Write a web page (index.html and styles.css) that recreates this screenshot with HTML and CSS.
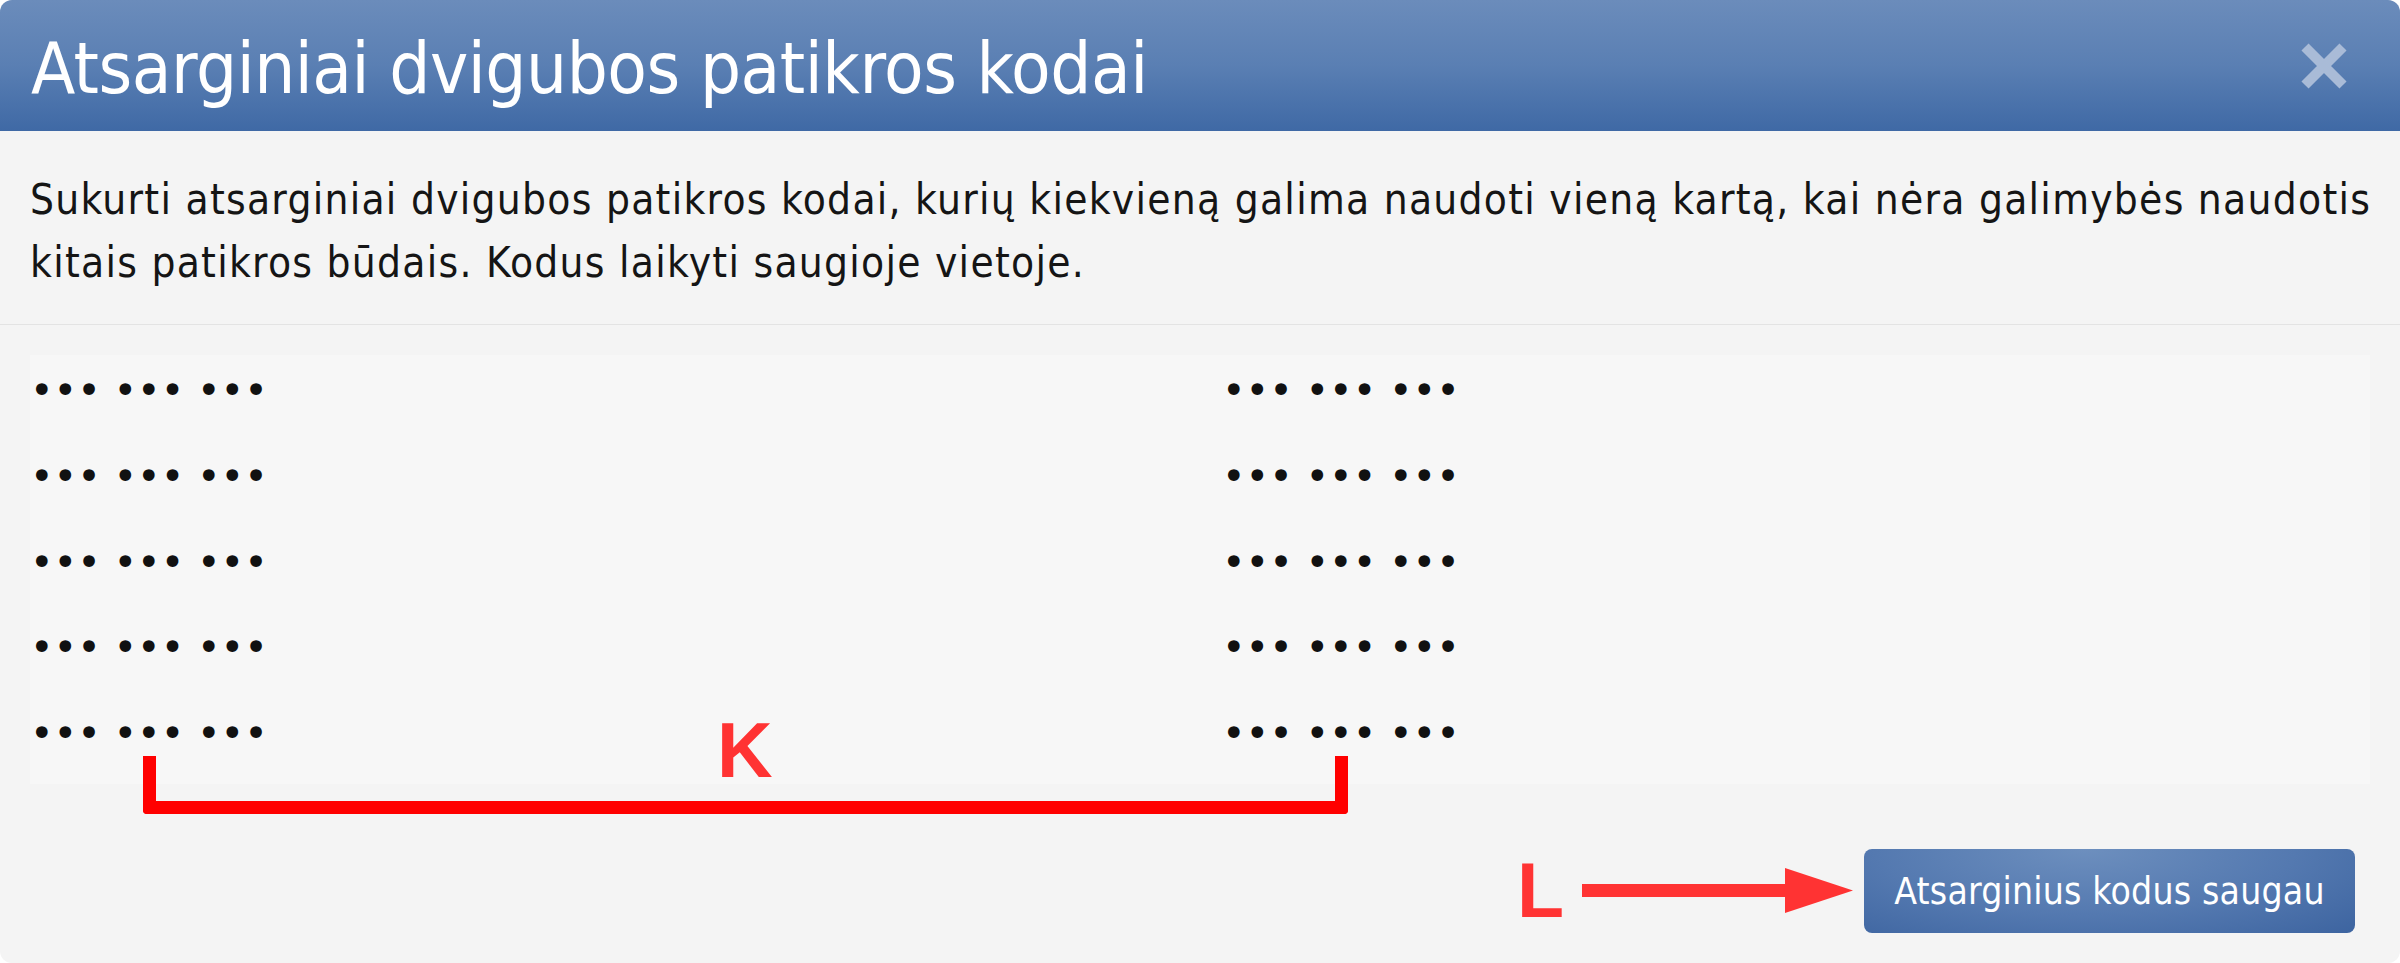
FILE: index.html
```html
<!DOCTYPE html>
<html lang="lt">
<head>
<meta charset="utf-8">
<title>Atsarginiai dvigubos patikros kodai</title>
<link rel="stylesheet" href="styles.css">
</head>
<body>
<div class="dialog">
  <div class="header">
    <h1 class="title">Atsarginiai dvigubos patikros kodai</h1>
    <svg class="close" width="48" height="46" viewBox="0 0 48 46" aria-label="Uždaryti">
      <path d="M5 4 L43 42 M43 4 L5 42" stroke="#a9bbd7" stroke-width="10" fill="none"/>
    </svg>
  </div>
  <div class="intro">
    <p class="intro-text">Sukurti atsarginiai dvigubos patikros kodai, kurių kiekvieną galima naudoti vieną kartą, kai nėra galimybės naudotis<br>kitais patikros būdais. Kodus laikyti saugioje vietoje.</p>
  </div>
  <div class="codes">
    <div class="code">••• ••• •••</div>
    <div class="code">••• ••• •••</div>
    <div class="code">••• ••• •••</div>
    <div class="code">••• ••• •••</div>
    <div class="code">••• ••• •••</div>
    <div class="code">••• ••• •••</div>
    <div class="code">••• ••• •••</div>
    <div class="code">••• ••• •••</div>
    <div class="code">••• ••• •••</div>
    <div class="code">••• ••• •••</div>
  </div>
  <div class="footer">
    <button class="save-btn">Atsarginius kodus saugau</button>
  </div>

  <div class="bracket"></div>
  <div class="mark mark-k">K</div>
  <div class="mark mark-l">L</div>
  <svg class="arrow" width="271" height="45" viewBox="0 0 271 45">
    <rect x="0" y="16" width="205" height="13" fill="#ff3333"/>
    <polygon points="203,0 271,22.5 203,45" fill="#ff3333"/>
  </svg>
</div>
</body>
</html>
```
FILE: styles.css
```css
html, body {
  margin: 0;
  padding: 0;
  background: #ffffff;
}

.dialog {
  position: relative;
  width: 2400px;
  height: 963px;
  border-radius: 12px;
  overflow: hidden;
  background: #f4f4f4;
  display: flex;
  flex-direction: column;
  font-family: "DejaVu Sans Condensed", "DejaVu Sans", sans-serif;
  font-stretch: condensed;
}

.header {
  height: 131px;
  flex: none;
  box-sizing: border-box;
  padding: 0 52px 0 31px;
  display: flex;
  align-items: center;
  justify-content: space-between;
  background: linear-gradient(to bottom, #6b8cbb 0%, #5a7fb3 50%, #3f69a5 100%);
}

.title {
  margin: 0;
  font-weight: normal;
  font-size: 72px;
  line-height: 1;
  letter-spacing: -0.45px;
  color: #ffffff;
  padding-top: 4px;
}

.close {
  display: block;
  flex: none;
}

.intro {
  flex: none;
  padding: 37px 30px 30px 30px;
  border-bottom: 1px solid #e3e3e3;
}

.intro-text {
  margin: 0;
  font-size: 42px;
  line-height: 63px;
  letter-spacing: 1.27px;
  color: #151515;
  white-space: nowrap;
}

.codes {
  flex: none;
  margin: 30px 30px 0 30px;
  height: 429px;
  box-sizing: border-box;
  padding-top: 15px;
  background: #f7f7f7;
  display: grid;
  grid-template-columns: 1192px 1fr;
  grid-auto-flow: column;
  grid-template-rows: repeat(5, 40px);
  row-gap: 45.75px;
}

.code {
  font-family: "DejaVu Sans", sans-serif;
  font-stretch: normal;
  font-size: 40px;
  line-height: 40px;
  color: #111111;
  white-space: pre;
}

.footer {
  flex: 1;
  display: flex;
  justify-content: flex-end;
  align-items: flex-start;
  padding: 65px 45px 0 0;
}

.save-btn {
  height: 84px;
  width: 491px;
  border: none;
  border-radius: 8px;
  padding: 0;
  font-family: "DejaVu Sans Condensed", "DejaVu Sans", sans-serif;
  font-stretch: condensed;
  font-size: 37px;
  letter-spacing: 0.2px;
  color: #ffffff;
  background: radial-gradient(ellipse at 45% 0%, #6d8fbe 0%, #5479b0 55%, #3d64a0 100%);
}

.bracket {
  position: absolute;
  left: 143px;
  top: 756px;
  width: 1205px;
  height: 58px;
  box-sizing: border-box;
  border: 13px solid #ff0000;
  border-top: none;
  border-radius: 0 0 4px 4px;
}

.mark {
  position: absolute;
  font-family: "Liberation Sans", Arial, sans-serif;
  font-weight: bold;
  font-size: 77px;
  line-height: 77px;
  color: #ff3333;
}

.mark-k {
  left: 717px;
  top: 712px;
}

.mark-l {
  left: 1517px;
  top: 852px;
}

.arrow {
  position: absolute;
  left: 1582px;
  top: 868px;
}
```
